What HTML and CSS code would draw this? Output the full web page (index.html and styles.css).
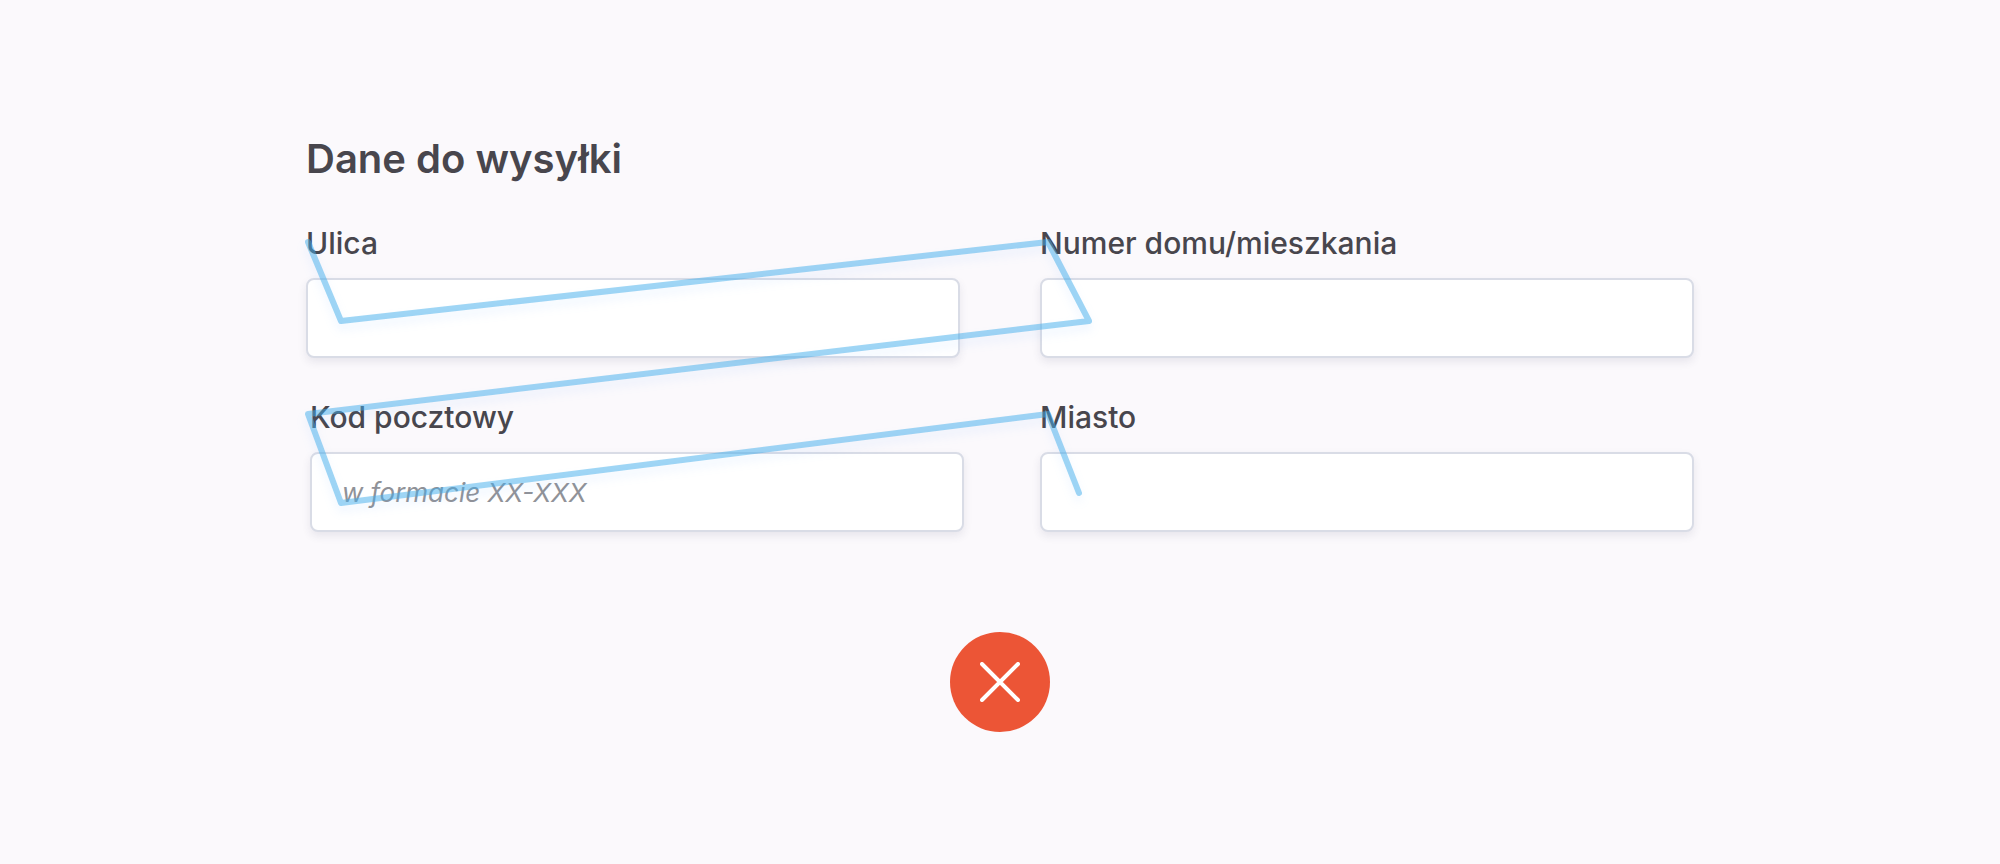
FILE: index.html
```html
<!DOCTYPE html>
<html lang="pl">
<head>
  <meta charset="utf-8">
  <meta name="viewport" content="width=device-width, initial-scale=1">
  <title>Dane do wysyłki</title>
  <link rel="stylesheet" href="styles.css">
</head>
<body>
  <main class="page">
    <form class="shipping">
      <h1 class="title">Dane do wysyłki</h1>
      <div class="fields">
        <div class="row">
          <div class="field">
            <label class="label" for="street">Ulica</label>
            <input class="input" id="street" type="text">
          </div>
          <div class="field">
            <label class="label" for="number">Numer domu/mieszkania</label>
            <input class="input" id="number" type="text">
          </div>
        </div>
        <div class="row row-inset">
          <div class="field">
            <label class="label" for="postcode">Kod pocztowy</label>
            <input class="input" id="postcode" type="text" placeholder="w formacie XX-XXX">
          </div>
          <div class="field">
            <label class="label" for="city">Miasto</label>
            <input class="input" id="city" type="text">
          </div>
        </div>
        <svg class="eye-path" viewBox="0 0 1388 307" preserveAspectRatio="none" aria-hidden="true">
          <path d="M2 17 L35 96 L742 17 L783 96 L2 189 L35 278 L742 189 L773 268"/>
        </svg>
      </div>
      <button class="verdict" type="button" aria-label="Źle">
        <svg class="cross" viewBox="0 0 40 40" aria-hidden="true">
          <path d="M2 2 L38 38 M38 2 L2 38"/>
        </svg>
      </button>
    </form>
  </main>
</body>
</html>
```

FILE: styles.css
```css
* {
  box-sizing: border-box;
}

body {
  margin: 0;
  min-height: 100vh;
  background: #fbf9fc;
  color: #48464d;
  font-family: Inter, "Liberation Sans", sans-serif;
}

.page {
  padding: 135px 24px 132px;
}

.shipping {
  display: flex;
  flex-direction: column;
  max-width: 1388px;
  margin: 0 auto;
}

.title {
  margin: 0 0 42px;
  font-size: 40px;
  font-weight: 600;
  line-height: 48px;
}

.fields {
  position: relative;
  display: flex;
  flex-direction: column;
  gap: 41px;
}

.row {
  display: grid;
  grid-template-columns: 1fr 1fr;
  gap: 80px;
}

.row-inset {
  gap: 76px;
  padding-left: 4px;
}

.field {
  display: flex;
  flex-direction: column;
  gap: 17px;
}

.label {
  font-size: 30px;
  font-weight: 500;
  line-height: 36px;
}

.input {
  width: 100%;
  height: 80px;
  padding: 0 30px;
  border: 2px solid #d9dce6;
  border-radius: 8px;
  background: #fff;
  box-shadow: 0 4px 8px rgba(60, 60, 100, 0.1);
  color: inherit;
  font: 400 26px Inter, "Liberation Sans", sans-serif;
}

.input::placeholder {
  color: #909298;
  font-style: italic;
  opacity: 1;
}

.eye-path {
  position: absolute;
  inset: 0;
  width: 100%;
  height: 100%;
  overflow: visible;
  pointer-events: none;
  fill: none;
  stroke: rgba(65, 174, 235, 0.5);
  stroke-width: 6px;
  stroke-linecap: round;
  stroke-linejoin: round;
  filter: drop-shadow(0 6px 5px rgba(90, 160, 255, 0.2));
}

.verdict {
  display: grid;
  place-items: center;
  align-self: center;
  width: 100px;
  height: 100px;
  margin-top: 100px;
  padding: 0;
  border: 0;
  border-radius: 50%;
  background: #ec5536;
}

.cross {
  width: 40px;
  height: 40px;
  fill: none;
  stroke: #fff;
  stroke-width: 4px;
  stroke-linecap: round;
}
```
